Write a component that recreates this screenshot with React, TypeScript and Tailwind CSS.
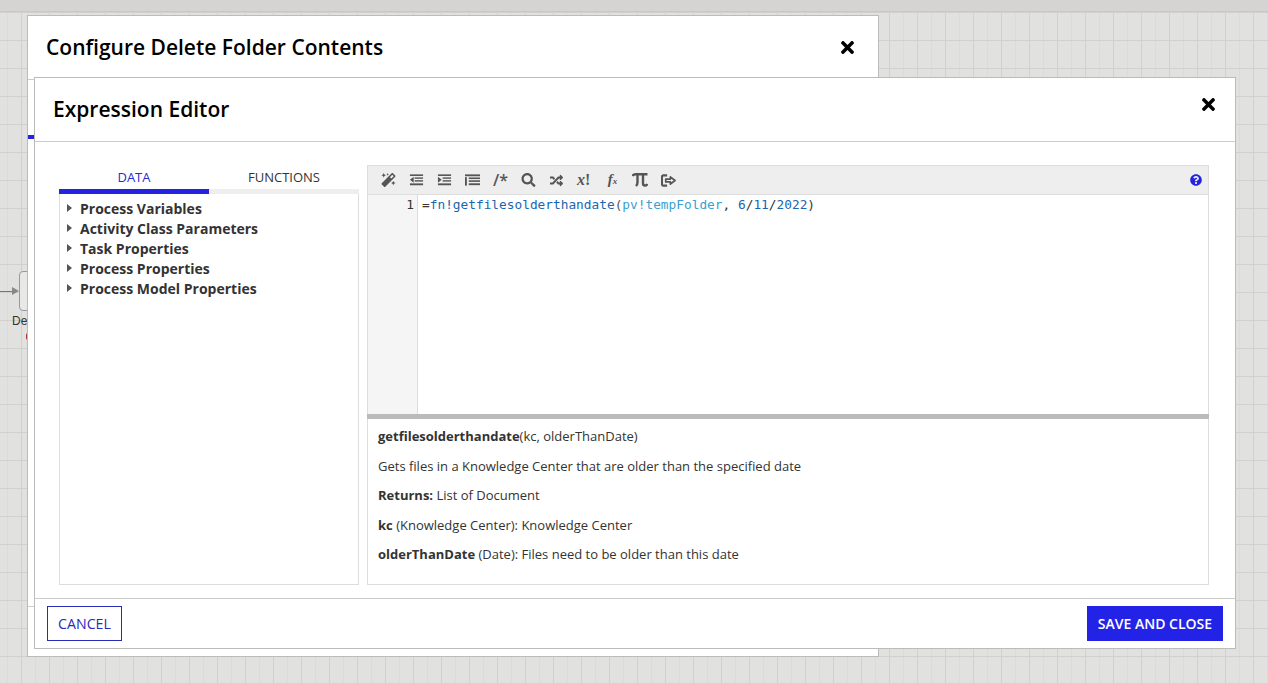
import { FaMagic, FaSearch, FaRandom, FaTimes, FaQuestionCircle } from "react-icons/fa";

const dataRows = [
  "Process Variables",
  "Activity Class Parameters",
  "Task Properties",
  "Process Properties",
  "Process Model Properties",
];

function SignOutIcon() {
  return (
    <svg viewBox="0 0 16 14" className="h-[13px] w-[15px] -translate-x-[1px]" fill="none" stroke="currentColor">
      <path d="M6.5 1.500H2.400C1.600 1.500 1 2.100 1 2.900v8.200c0 .8.6 1.400 1.400 1.400h4.100" strokeWidth="2.200" />
      <path d="M5 5.500h5V3l5 4-5 4V8.500H5z" strokeWidth="1.800" strokeLinejoin="round" />
    </svg>
  );
}

function AlignIcon() {
  return (
    <svg viewBox="0 0 16 12" className="h-[12px] w-[15px]" fill="currentColor">
      <rect x="0" y="0" width="16" height="2" />
      <rect x="0" y="3" width="2" height="9" />
      <rect x="4" y="3.300" width="12" height="1.700" />
      <rect x="4" y="6.300" width="12" height="1.700" />
      <rect x="4" y="9.500" width="12" height="2" />
    </svg>
  );
}

function OutdentIcon() {
  return (
    <svg viewBox="0 0 16 12" className="h-[12px] w-[15px]" fill="currentColor">
      <rect x="1" y="0" width="14" height="1.700" />
      <rect x="6" y="3.200" width="9" height="1.500" />
      <rect x="6" y="6.200" width="9" height="1.500" />
      <rect x="1" y="9.600" width="14" height="2" />
      <path d="M5 2.600v6.200L1 5.700z" />
    </svg>
  );
}

function IndentIcon() {
  return (
    <svg viewBox="0 0 16 12" className="h-[12px] w-[15px]" fill="currentColor">
      <rect x="1" y="0" width="14" height="1.700" />
      <rect x="6" y="3.200" width="9" height="1.500" />
      <rect x="6" y="6.200" width="9" height="1.500" />
      <rect x="1" y="9.600" width="14" height="2" />
      <path d="M1 2.600v6.200l4-3.100z" />
    </svg>
  );
}

function PiIcon() {
  return (
    <svg viewBox="0 0 16 14" className="h-[14px] w-[16px] -translate-x-[1px]" fill="none" stroke="currentColor" strokeWidth="2.400">
      <path d="M.5 3c.6-1.200 1.600-1.800 3-1.800h12" />
      <path d="M5.500 1.200v8c0 1.600-.5 2.800-1.500 3.800" />
      <path d="M11 1.200v9c0 1.500.7 2.300 2 2.300 1 0 1.800-.5 2.300-1.500" />
    </svg>
  );
}

function Toolbar() {
  return (
    <div className="flex h-[30px] items-center justify-between border border-[#ddd] bg-[#eee] pl-[13px] pr-[6px] text-[#555]">
      <div className="flex items-center gap-[13px]">
        <FaMagic className="h-[14px] w-[15px]" />
        <OutdentIcon />
        <IndentIcon />
        <AlignIcon />
        <span className="w-[15px] text-[16px] font-semibold leading-none">/*</span>
        <FaSearch className="h-[14px] w-[15px]" />
        <FaRandom className="h-[13px] w-[15px]" />
        <span className="w-[15px] whitespace-nowrap font-['Liberation_Serif',serif] text-[16px] font-bold leading-none">
          <i>x</i>!
        </span>
        <span className="mb-[2px] w-[15px] whitespace-nowrap text-center font-['Liberation_Serif',serif] text-[15px] font-bold italic leading-none">
          f<span className="text-[9px]">x</span>
        </span>
        <PiIcon />
        <SignOutIcon />
      </div>
      <FaQuestionCircle className="h-[12px] w-[12px] text-[#2323e0]" />
    </div>
  );
}

function CodeEditor() {
  return (
    <div className="flex h-[219px] border-x border-[#ddd]">
      <div className="w-[50px] border-r border-[#ddd] bg-[#f5f5f5] pr-[3px] pt-[2px] text-right font-['DejaVu_Sans_Mono',monospace] text-[12.8px] leading-[16px] text-[#333]">
        1
      </div>
      <div className="pl-[4px] pt-[2px] font-['DejaVu_Sans_Mono',monospace] text-[12.8px] leading-[16px] text-[#333]">
        =<span className="text-[#1a66b0]">fn!getfilesolderthandate</span>
        <span className="text-[#555]">(</span>
        <span className="text-[#3ca0d0]">pv!tempFolder</span>, <span className="text-[#1a66b0]">6</span>/
        <span className="text-[#1a66b0]">11</span>/<span className="text-[#1a66b0]">2022</span>)
      </div>
    </div>
  );
}

function Docs() {
  return (
    <div className="flex h-[166px] flex-col gap-[11px] border-x border-b border-[#ddd] px-[10px] pt-[8px] text-[13px] leading-[18.6px] text-[#333]">
      <p>
        <b>getfilesolderthandate</b>(kc, olderThanDate)
      </p>
      <p>Gets files in a Knowledge Center that are older than the specified date</p>
      <p>
        <b>Returns:</b> List of Document
      </p>
      <p>
        <b>kc</b> (Knowledge Center): Knowledge Center
      </p>
      <p>
        <b>olderThanDate</b> (Date): Files need to be older than this date
      </p>
    </div>
  );
}

export default function App() {
  return (
    <div className="relative h-[683px] w-[1268px] overflow-hidden bg-[#e1e1df] font-['Open_Sans',sans-serif]">
      <div className="h-[12px] border-b border-[#c9c8c6] bg-[#d6d4d2]" />
      {/* process canvas grid */}
      <div className="absolute inset-x-0 bottom-0 top-[12px] bg-[linear-gradient(to_right,#d0d0ce_1px,transparent_1px),linear-gradient(to_bottom,#d0d0ce_1px,transparent_1px),linear-gradient(to_right,#dbdbd9_1px,transparent_1px)] bg-[size:28px_28px,28px_28px,14px_14px] bg-[position:21px_0,21px_0,7px_0]" />

      {/* node behind the dialogs */}
      <div className="absolute left-0 top-[291px] h-px w-[14px] bg-[#777]" />
      <div className="absolute left-[12px] top-[287px] h-0 w-0 border-y-[4px] border-l-[7px] border-y-transparent border-l-[#888]" />
      <div className="absolute left-[19px] top-[271px] h-[40px] w-[12px] rounded-l-[4px] border border-[#999] bg-[#e8e8e6]" />
      <div className="absolute left-[12px] top-[314px] font-['Liberation_Sans',sans-serif] text-[12px] leading-[14px] text-[#333]">
        De
      </div>
      <div className="absolute left-[26px] top-[333px] h-[7px] w-[4px] rounded-full border-l border-[#a33]" />

      {/* configure dialog */}
      <div className="absolute left-[27px] top-[15px] h-[642px] w-[852px] border border-[#bbb] bg-white">
        <div className="flex h-[63px] items-center justify-between pl-[18px] pr-[24px]">
          <h2 className="pb-[2px] text-[21px] font-semibold leading-[26px] text-black">Configure Delete Folder Contents</h2>
          <FaTimes className="h-[19px] w-[13px] text-black" />
        </div>
        <div className="border-t border-[#ccc]" />
        <div className="mt-[55px] h-[4px] w-[6px] bg-[#2323e0]" />
        <div className="mt-[467px] border-t border-[#ccc]" />
      </div>

      {/* expression editor dialog */}
      <div className="absolute left-[34px] top-[77px] flex h-[572px] w-[1202px] flex-col border border-[#bbb] bg-white">
        <div className="flex h-[64px] shrink-0 items-center justify-between border-b border-[#ccc] pl-[18px] pr-[20px]">
          <h1 className="pb-[1px] text-[21px] font-semibold leading-[26px] text-black">Expression Editor</h1>
          <FaTimes className="mb-[10px] h-[19px] w-[13px] text-black" />
        </div>

        <div className="flex flex-1 gap-[8px] pl-[24px] pr-[26px] pt-[23px]">
          <div className="flex w-[300px] flex-col">
            <div className="flex h-[29px] text-[13px]">
              <div className="flex w-[150px] flex-col">
                <div className="flex-1 pt-[4px] text-center leading-[16px] text-[#2a2ad0]">DATA</div>
                <div className="h-[5px] bg-[#2323e0]" />
              </div>
              <div className="flex w-[150px] flex-col">
                <div className="flex-1 pt-[4px] text-center leading-[16px] text-[#333]">FUNCTIONS</div>
                <div className="h-[5px] bg-[#eee]" />
              </div>
            </div>
            <div className="h-[391px] border border-t-0 border-[#ddd] pl-[7px] pt-[4px]">
              {dataRows.map((row) => (
                <div key={row} className="flex h-[20px] items-center gap-[8px] text-[14px] font-bold text-[#333]">
                  <span className="h-0 w-0 border-y-[4px] border-l-[5px] border-y-transparent border-l-[#555]" />
                  {row}
                </div>
              ))}
            </div>
          </div>

          <div className="flex w-[842px] flex-col">
            <Toolbar />
            <CodeEditor />
            <div className="h-[5px] bg-[#bbb]" />
            <Docs />
          </div>
        </div>

        <div className="flex h-[50px] shrink-0 items-center justify-between border-t border-[#ccc] pl-[12px] pr-[12px]">
          <button className="h-[35px] w-[75px] border border-[#2a2ab8] text-[14.2px] font-medium text-[#2a2ab8]">CANCEL</button>
          <button className="h-[35px] w-[136px] bg-[#2323e8] text-[14px] font-semibold text-white">SAVE AND CLOSE</button>
        </div>
      </div>
    </div>
  );
}
